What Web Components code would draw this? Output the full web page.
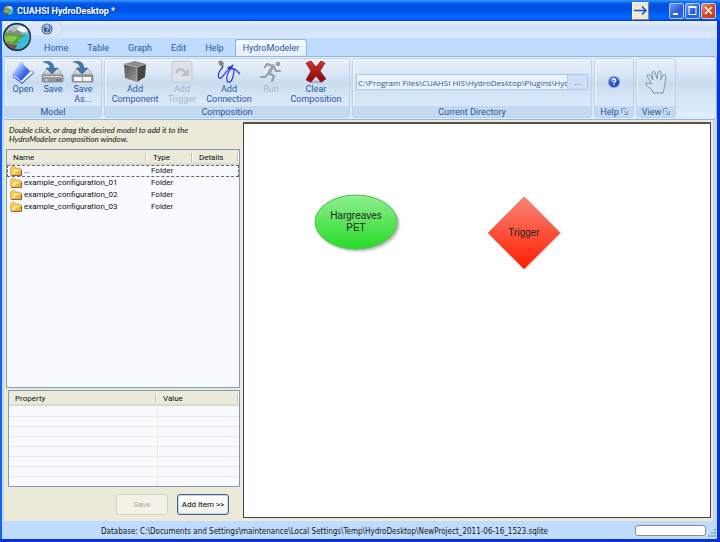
<!DOCTYPE html>
<html lang="en">
<head>
<meta charset="utf-8">
<title>CUAHSI HydroDesktop</title>
<style>
  html, body { height: 100%; margin: 0; }
  body { font: 9px/10px Roboto, "Liberation Sans", sans-serif; color: #111; background: #fff; }
</style>
</head>
<body>
<hydro-desktop></hydro-desktop>
<script>
const define = (name, html, setup) => customElements.define(name, class extends HTMLElement {
  connectedCallback() {
    if (this.shadowRoot) return;
    const t = document.createElement("template");
    t.innerHTML = html;
    this.attachShadow({ mode: "open" }).append(t.content.cloneNode(true));
    if (setup) setup(this, this.shadowRoot);
  }
});

const globe = `
  <defs><clipPath id="c"><circle cx="15" cy="15" r="12.5"/></clipPath>
  <linearGradient id="s" x1="0" y1="0" x2="0" y2="1"><stop offset="0" stop-color="#b9dcea"/><stop offset="1" stop-color="#3d9fd0"/></linearGradient></defs>
  <circle cx="15" cy="15" r="14.5" fill="#aab9cc"/>
  <circle cx="15" cy="15" r="14" fill="#20262a"/>
  <g clip-path="url(#c)"><path fill="url(#s)" d="M0 0h30v30H0z"/>
  <path fill="#f6fbfd" d="M15 7q2-4 6-2 5-1 5 4l-5 1-6-1z"/>
  <path fill="#858d8b" d="M1 13L12 5l4 3 5 4-9 3H1z"/><path fill="#b3b9b7" d="M8 8l4-3 4 3-4 2z"/>
  <path fill="#55a232" d="M1 13q9-3 15 0l9-1-3 4-6 2 2 3-6 1H1z"/>
  <path fill="#86c647" d="M2 15q8-3 14 0l-5 5-8-1z"/>
  <path fill="#35bde2" d="M17 18l8-6h4v12l-8 5-8-4 6-4z"/>
  <path fill="#6b5b4b" d="M2 20l9 1 4 2-2 5H8z"/><path fill="#a19280" d="M2 20l9 1 4 2-8-1z"/></g>`;

const icons = {
  open: `<path fill="#fff" stroke="#a8bfe0" stroke-width=".7" d="M2 13L10 2l3 1-7 14z"/>
    <path fill="url(#g)" d="M10 2l9 9-9 10-8-7z"/><path fill="#fff" stroke="#5477dd" stroke-width=".6" d="M10 21l10-10 3 1-12 11-9-7v-2z"/>
    <path fill="#2b50e0" d="M11 23L23 12v1L11 24l-9-7v-1z"/>
    <defs><linearGradient id="g" x1="0" y1="0" x2="1" y2="1"><stop offset=".15" stop-color="#dceaff"/><stop offset=".6" stop-color="#3d6ded"/><stop offset="1" stop-color="#1633d6"/></linearGradient></defs>`,
  save: `<defs><linearGradient id="g" x1="0" y1="0" x2="0" y2="1"><stop offset="0" stop-color="#e8e8e8"/><stop offset="1" stop-color="#b4b6b8"/></linearGradient></defs>
    <path fill="url(#g)" stroke="#8d9094" stroke-width=".6" d="M5 9h13l4 7H1z"/><rect x="1" y="15" width="21" height="7" rx="1" fill="#96999b" stroke="#74777b" stroke-width=".6"/>
    <path stroke="#dedfe0" d="M2 16.500h19"/><path stroke="#555" stroke-width=".8" d="M15 20h5"/><path stroke="#fff" stroke-width=".8" d="M4 20h3"/>
    <path fill="#4577ae" stroke="#2d5a8d" stroke-width=".5" d="M2 2q10-3 11 6h4l-6 6-6-6h4q0-5-7-6z"/>`,
  saveas: `<defs><linearGradient id="g" x1="0" y1="0" x2="0" y2="1"><stop offset="0" stop-color="#e8e8e8"/><stop offset="1" stop-color="#b4b6b8"/></linearGradient></defs>
    <path fill="url(#g)" stroke="#8d9094" stroke-width=".6" d="M5 9h13l4 7H1z"/><rect x="1" y="15" width="21" height="7" rx="1" fill="#96999b" stroke="#74777b" stroke-width=".6"/>
    <path fill="#f6f6f6" d="M3 17h8v4H3zM12 17h8v4h-8z"/>
    <path fill="#4577ae" stroke="#2d5a8d" stroke-width=".5" d="M2 2q10-3 11 6h4l-6 6-6-6h4q0-5-7-6z"/>`,
  cube: `<defs><linearGradient id="g" x1="0" y1="0" x2="1" y2="1"><stop offset="0" stop-color="#555"/><stop offset="1" stop-color="#9a9a9a"/></linearGradient></defs>
    <path fill="#8d8d8d" d="M1 4l11-3 11 3-9 3z"/><path fill="url(#g)" d="M1 4l13 3v15L2 18z"/><path fill="#454545" d="M14 7l9-3-1 13-8 5z"/><path fill="none" stroke="#b5b5b5" stroke-width=".8" d="M1 4l13 3 9-3M14 7v15"/>`,
  trigger: `<rect x="2" y="1" width="20" height="21" rx="2" fill="#dde2e8" stroke="#c3cad2"/><path fill="none" stroke="#b9c0c8" stroke-width="2.500" d="M6 13q4-7 9-1"/><path fill="#b9c0c8" d="M19 8v8h-8z"/>`,
  connection: `<path fill="#8a8a8a" d="M1 2l3-2 3 3-1 3H3z"/><path stroke="#666" stroke-width="1.500" d="M5 5l1 2"/>
    <path fill="none" stroke="#2b36dc" stroke-width="1.200" stroke-linejoin="round" d="M6 7C3 10 0 14 2 18c2 3 8-9 14-13-5 7-8 14-5 17 4 2 6-8 6-12-1-3-6-4-6-2 1 3 5-1 8 2l4 4"/>`,
  run: `<g fill="none" stroke="#9b9fa4" stroke-linecap="round" stroke-linejoin="round"><path stroke-width="3.200" d="M14 6l-4 7"/><path stroke-width="2.200" d="M14 6L8 4 6 7M15 7l2 4 4 0M10 13l5 3-2 5M10 13l-4 4H2"/></g><circle cx="19" cy="4" r="2.300" fill="#9b9fa4"/>`,
  clear: `<defs><linearGradient id="g" x1="0" y1="0" x2="0" y2="1"><stop offset="0" stop-color="#cf3531"/><stop offset="1" stop-color="#860506"/></linearGradient></defs>
    <ellipse cx="12" cy="22" rx="8" ry="1.300" fill="#9eb2c8"/><path fill="url(#g)" stroke="#8e1111" stroke-width=".7" d="M2 3l5-2 5 6 5-6 4 2-5 8 6 8-5 3-5-6-5 6-5-2 5-9z"/>`,
  help: `<defs><radialGradient id="g" cx=".4" cy=".3"><stop offset="0" stop-color="#7d9df5"/><stop offset="1" stop-color="#1a42c9"/></radialGradient></defs>
    <circle cx="12" cy="12" r="6.200" fill="#8fa6cd"/><circle cx="12" cy="12" r="5" fill="url(#g)"/><path fill="none" stroke="#fff" stroke-width="1.300" d="M10.300 10.600q0-1.600 1.700-1.600 2 0 1.800 1.500-.2 1-1.700 2v.8M12 14v1.300"/>`,
  hand: `<path fill="#d3e4f0" stroke="#7599b3" stroke-width="1" stroke-linejoin="round" d="M9 23l-1-3-6-5q-1-3 2-2l4 1L3 6q0-3 3-1l3 5L8 3q1-3 3-1l2 7 1-7q2-2 3 0v8l2-5q2-2 3 1l-1 7-1 6-1 4z"/>`
};

define("app-icon", `<style>:host{display:block;width:24px;height:24px}svg{display:block;width:100%;height:100%}</style><svg viewBox="0 0 24 24" aria-hidden="true"></svg>`,
  (el, r) => { r.querySelector("svg").innerHTML = icons[el.getAttribute("name")]; });

define("title-bar", `<style>
  :host{display:flex;align-items:center;height:21px;padding:0 4px 0 3px;box-sizing:border-box;
    background:linear-gradient(#3b9bff 0,#1670f5 2px,#0054e3 4px,#0052e2 10px,#0064ff 15px,#0064ff 19px,#0038bd 21px)}
  svg{display:block}
  h1{flex:1;margin:0 0 0 3px;font:bold 9px/14px Roboto,"Liberation Sans",sans-serif;color:#fff;text-shadow:1px 1px #00349c}
  button{display:grid;place-items:center;width:15px;height:16px;padding:0;margin-left:1px;border:1px solid #b7cdfa;border-radius:2px;background:linear-gradient(135deg,#6f9cf5,#2458dc 60%,#2f6df0)}
  .dock{width:17px;height:18px;margin:0 19px 0 0;border:1px solid #f8f6ee;border-right-color:#8a8878;border-bottom-color:#8a8878;border-radius:0;background:#ece9d8}
  .x{background:linear-gradient(135deg,#f09070,#dc4522 50%,#c8380f)}
  </style>
  <svg width="11" height="11" viewBox="0 0 30 30" aria-hidden="true">${globe}</svg>
  <h1><slot></slot></h1>
  <button class="dock" aria-label="Dock"><svg width="15" height="13" viewBox="0 0 15 13" fill="none" stroke="#0f50d8" stroke-width="1.500"><path d="M1 6.500h12M9 2.500l4 4-4 4"/></svg></button>
  <button aria-label="Minimize"><svg width="13" height="13"><path fill="#fff" d="M3 9h5v2H3z"/></svg></button>
  <button aria-label="Maximize"><svg width="13" height="13" fill="none" stroke="#fff"><path d="M3 3.500h7v7H3z"/><path stroke-width="2" d="M2.500 3h8"/></svg></button>
  <button class="x" aria-label="Close"><svg width="13" height="13" stroke="#fff" stroke-width="1.700"><path d="M3 3l7 7M10 3l-7 7"/></svg></button>`);

define("ribbon-button", `<style>
  :host{display:block}
  button{display:flex;flex-direction:column;align-items:center;width:100%;padding:0;border:0;background:none;font:inherit;color:#2c569c;text-align:center}
  button:disabled{color:#a9b4c3}
  </style><button><span><slot></slot></span></button>`,
  (el, r) => {
    const button = r.querySelector("button");
    const i = document.createElement("app-icon");
    i.setAttribute("name", el.getAttribute("icon"));
    button.prepend(i);
    button.disabled = el.hasAttribute("disabled");
    if (el.hasAttribute("label")) button.setAttribute("aria-label", el.getAttribute("label"));
  });

define("ribbon-group", `<style>
  :host{display:flex;flex-direction:column;box-sizing:border-box;height:60px;border:1px solid #bdd2ea;border-radius:3px;box-shadow:inset 1px 1px #f3f8fe;overflow:hidden;
   background:linear-gradient(#e8f1fc,#dae7f6 14px,#c9dcef 24px,#d4e5f7 36px,#e0edfd)}
  .items{flex:1;display:flex;padding:1px 3px 0;min-height:0}
  .items.middle{align-items:center;justify-content:center;padding-bottom:2px}
  footer{display:flex;align-items:center;justify-content:center;gap:2px;height:11px;background:#c2d9f0;color:#2c569c}
  button{padding:0;border:0;background:none;height:7px} svg{display:block}
  </style><div class="items"><slot></slot></div><footer><span></span></footer>`,
  (el, r) => {
    r.querySelector("span").textContent = el.getAttribute("caption");
    if (el.hasAttribute("middle")) r.querySelector(".items").classList.add("middle");
    if (el.hasAttribute("launcher")) r.querySelector("footer").insertAdjacentHTML("beforeend",
      `<button aria-label="${el.getAttribute("caption")} options"><svg width="7" height="7" fill="none" stroke="#7896bf"><path d="M.500 5V.500H5M2.500 2.500l3 3M6.500 3v3.500H3"/></svg></button>`);
  });

define("directory-field", `<style>
  :host{display:flex;flex:1;height:16px;border:1px solid #a9c5ea;border-radius:2px;box-sizing:border-box;background:#e6effa}
  input{flex:1;min-width:0;padding:0 0 0 1px;border:0;background:#eaf2fc;font:8px/13px "Open Sans","Liberation Sans",sans-serif;color:#2c569c}
  button{width:20px;padding:0;border:0;border-left:1px solid #b4cdec;background:#cfe0f5;font:inherit;color:#2c569c}
  </style><input aria-label="Current directory" value="C:\\Program Files\\CUAHSI HIS\\HydroDesktop\\Plugins\\HydroModeler"><button aria-label="Browse">...</button>`);

define("ribbon-bar", `<style>
  :host{display:block;position:relative;background:#bfdbff}
  .quick{height:17px;background:linear-gradient(#e6effc,#cfe0f8 6px,#dce9fb);box-sizing:border-box;padding-left:30px}
  .quick button{display:grid;place-items:center;width:31px;height:16px;padding:0;border:1px solid #c6d8ef;border-left:0;border-radius:0 8px 8px 0;background:#dce8f8}
  .orb{position:absolute;left:0;top:1px;padding:0;border:0;background:none}
  svg{display:block}
  nav{display:flex;height:18px;padding-left:33px;align-items:flex-end}
  nav button{height:17px;padding:0 9px;border:1px solid transparent;border-width:1px 0;background:none;font:inherit;color:#2c569c}
  nav button[aria-selected=true]{margin-left:2px;padding:0 7px;border:1px solid #8fb5e6;border-bottom:0;border-radius:3px 3px 0 0;background:linear-gradient(#f6faff,#e3edfb)}
  nav button:nth-child(2),nav button:nth-child(4){padding:0 10px}
  .panel{display:flex;gap:2px;padding:1px 40px 1px 1px;height:64px;box-sizing:border-box;border:1px solid #8fb5e6;border-radius:3px;background:linear-gradient(#e8f1fc,#dae7f6 15px,#c9dcef 26px,#d4e5f7 38px,#e0edfd)}
  .w30{width:30px}.w32{width:32px}.w40{width:40px}.w54{width:54px}.w60{width:60px}
  .grow{flex:1}
  </style>
  <div class="quick"><button aria-label="Help"><svg width="12" height="12" viewBox="0 0 12 12"><circle cx="6" cy="6" r="5" fill="#e6eef9" stroke="#44699e" stroke-width="1.200"/><circle cx="6" cy="6" r="3.500" fill="#2e5c9b"/><path fill="none" stroke="#fff" d="M4.500 5q0-1.500 1.500-1.500T7.500 5 6 6.500V7M6 7.700v1"/></svg></button></div>
  <button class="orb" aria-label="Application menu"><svg width="30" height="30" viewBox="0 0 30 30">${globe}</svg></button>
  <nav role="tablist"><button role="tab">Home</button><button role="tab">Table</button><button role="tab">Graph</button><button role="tab">Edit</button><button role="tab">Help</button><button role="tab" aria-selected="true">HydroModeler</button></nav>
  <div class="panel">
    <ribbon-group caption="Model"><ribbon-button class="w30" icon="open">Open</ribbon-button><ribbon-button class="w30" icon="save">Save</ribbon-button><ribbon-button class="w30" icon="saveas">Save<br>As...</ribbon-button></ribbon-group>
    <ribbon-group caption="Composition"><ribbon-button class="w54" icon="cube">Add<br>Component</ribbon-button><ribbon-button class="w40" icon="trigger" disabled>Add<br>Trigger</ribbon-button><ribbon-button class="w54" icon="connection">Add<br>Connection</ribbon-button><ribbon-button class="w30" icon="run" disabled>Run</ribbon-button><ribbon-button class="w60" icon="clear">Clear<br>Composition</ribbon-button></ribbon-group>
    <ribbon-group class="grow" caption="Current Directory" middle><directory-field></directory-field></ribbon-group>
    <ribbon-group caption="Help" launcher middle><ribbon-button class="w32" icon="help" label="Help"></ribbon-button></ribbon-group>
    <ribbon-group caption="View" launcher middle><ribbon-button class="w32" icon="hand" label="Pan"></ribbon-button></ribbon-group>
  </div>`);

const tableCss = `
  table{width:100%;border-collapse:collapse;table-layout:fixed;font:8px/11px Roboto,"Liberation Sans",sans-serif}
  th{height:15px;padding:0 0 0 6px;box-sizing:border-box;text-align:left;font-weight:400;background:linear-gradient(#ebeadb 12px,#d6d2c2);position:relative}
  th::after{content:"";position:absolute;right:0;top:3px;height:9px;border-left:1px solid #c7c5b2;border-right:1px solid #fff}`;

define("model-browser", `<style>
  :host{display:flex;flex:1;flex-direction:column;min-height:0}
  p{margin:0;padding:6px 5px 5px;font:italic 8px/9px Lato,"Liberation Sans",sans-serif}
  .list{flex:1;margin:0 2px;border:1px solid #7f9db9;background:#f9faff;min-height:0}
  ${tableCss}
  td{height:12px;padding:0 4px;line-height:12px;white-space:nowrap}
  td:first-child{padding-left:3px}
  .file{display:flex;align-items:center;gap:2px}
  .first{outline:1px dashed #666;outline-offset:-1px}
  svg{display:block;flex:none}
  .type,.details{width:46px}
  </style><p>Double click, or drag the desired model to add it to the<br>HydroModeler composition window.</p>
  <div class="list"><table><thead><tr><th>Name</th><th class="type">Type</th><th class="details">Details</th></tr></thead><tbody></tbody></table></div>`,
  (el, r) => {
    const folder = `<svg width="12" height="10" viewBox="0 0 12 10"><path fill="#f3cf60" stroke="#b98a20" stroke-width=".5" d="M.5 8.500V2l1-1.500h3L6 2h4v6.500z"/><path fill="#ffdf80" stroke="#d29a28" stroke-width=".4" d="M1 9l2-6h8.500v6z"/><path fill="#f2b035" d="M3 8.800l8-5v5z"/><path stroke="#4c3a12" stroke-width=".7" d="M1 9.500h10.500V4" fill="none"/></svg>`;
    r.querySelector("tbody").innerHTML = ["...", "example_configuration_01", "example_configuration_02", "example_configuration_03"]
      .map((n, i) => `<tr${i ? "" : ' class="first"'}><td><div class="file">${folder}<span>${n}</span></div></td><td>Folder</td><td></td></tr>`).join("");
  });

define("property-grid", `<style>
  :host{display:block;margin:2px 2px 0 4px;border:1px solid #7f9db9;background:#f9faff}
  ${tableCss}
  td{height:10px;padding:0;box-sizing:border-box;border-bottom:1px solid #ece9d8;line-height:8px}
  td:first-child{border-right:1px solid #ece9d8}
  tr:last-child td{border-bottom:0}
  .value{width:82px}
  </style><table><thead><tr><th>Property</th><th class="value">Value</th></tr></thead><tbody>${"<tr><td></td><td></td></tr>".repeat(8)}</tbody></table>`);

define("push-button", `<style>:host{display:block}
  button{display:block;width:52px;height:21px;padding:0;border:1px solid #3c6587;border-radius:3px;background:linear-gradient(#fff,#f1f0ea);box-shadow:inset 0 0 0 1px #c5d6f0;font:8px/11px Roboto,"Liberation Sans",sans-serif;color:#000}
  button:disabled{border-color:#d6d3c1;background:#f3f2e8;box-shadow:none;color:#aaa797}
  </style><button><slot></slot></button>`, (el, r) => { r.querySelector("button").disabled = el.hasAttribute("disabled"); });

define("model-node", `<style>
  :host{position:absolute;transform:translate(-50%,-50%);width:84px;height:76px;display:grid;place-items:center;text-align:center;font:10px/12px "Liberation Sans",sans-serif;color:#222}
  svg,span{grid-area:1/1} svg{display:block;overflow:visible;filter:drop-shadow(2px 2px 1px #0004)}
  :host([shape=diamond]) svg{filter:drop-shadow(1px 0 1px #0004)}
  span{position:relative}
  </style><svg width="84" height="76" viewBox="0 0 84 76"><defs>
  <linearGradient id="e" x1="0" y1="0" x2="0" y2="1"><stop offset="0" stop-color="#90ee90"/><stop offset="1" stop-color="#26db26"/></linearGradient>
  <linearGradient id="d" x1="0" y1="0" x2="0" y2="1"><stop offset="0" stop-color="#fa8576"/><stop offset="1" stop-color="#ff1c00"/></linearGradient></defs></svg><span><slot></slot></span>`,
  (el, r) => r.querySelector("svg").insertAdjacentHTML("beforeend", el.getAttribute("shape") === "ellipse"
    ? `<ellipse cx="42" cy="38" rx="41" ry="27" fill="url(#e)" stroke="#45c545"/>`
    : `<path d="M42 2l36 36-36 36L6 38z" fill="url(#d)" stroke="#e2604f" stroke-width=".5"/>`));

define("composition-canvas", `<style>
  :host{display:block;position:relative;box-sizing:border-box;border:1px solid #444;border-top:2px solid #55534a;background:#fff;overflow:hidden}
  .a{left:112px;top:98px}.b{left:280px;top:109px}
  </style><model-node class="a" shape="ellipse">Hargreaves<br>PET</model-node><model-node class="b" shape="diamond">Trigger</model-node>`);

define("status-bar", `<style>
  :host{display:flex;align-items:center;height:18px;background:#bfdbff;font:8px/12px "DejaVu Sans Condensed","Liberation Sans",sans-serif;color:#101820}
  span{flex:1;padding:4px 0 0 12px;text-align:center;white-space:nowrap}
  .bar{width:71px;height:11px;box-sizing:border-box;border:1px solid #8c8c8c;border-radius:3px;background:#fff}
  svg{display:block;margin:5px 1px 0 2px}
  </style><span><slot></slot></span><div class="bar" role="progressbar" aria-label="Progress"></div>
  <svg width="8" height="8" fill="#8fa6c4"><path d="M6 0h2v2H6zM6 3h2v2H6zM6 6h2v2H6zM3 3h2v2H3zM3 6h2v2H3zM0 6h2v2H0z"/></svg>`);

define("hydro-desktop", `<style>
  :host{display:flex;flex-direction:column;height:100vh;overflow:hidden;background:#0831d9}
  .frame{flex:1;display:flex;flex-direction:column;min-height:0;margin:0 3px 3px 0;border-left:2px solid #1663ee;background:#bfdbff}
  main{flex:1;display:flex;min-height:0;margin:0 4px 0 2px;padding-right:2px;background:#ece9d8}
  aside{display:flex;flex-direction:column;width:238px}
  .actions{display:flex;justify-content:flex-end;gap:9px;padding:7px 13px 6px 0}
  composition-canvas{flex:1;margin:2px 0 3px 1px}
  </style>
  <title-bar>CUAHSI HydroDesktop *</title-bar>
  <div class="frame"><ribbon-bar></ribbon-bar>
  <main><aside><model-browser></model-browser><property-grid></property-grid>
    <div class="actions"><push-button disabled>Save</push-button><push-button>Add Item &gt;&gt;</push-button></div></aside>
    <composition-canvas></composition-canvas></main>
  <status-bar>Database: C:\\Documents and Settings\\maintenance\\Local Settings\\Temp\\HydroDesktop\\NewProject_2011-06-16_1523.sqlite</status-bar></div>`);
</script>
</body>
</html>
